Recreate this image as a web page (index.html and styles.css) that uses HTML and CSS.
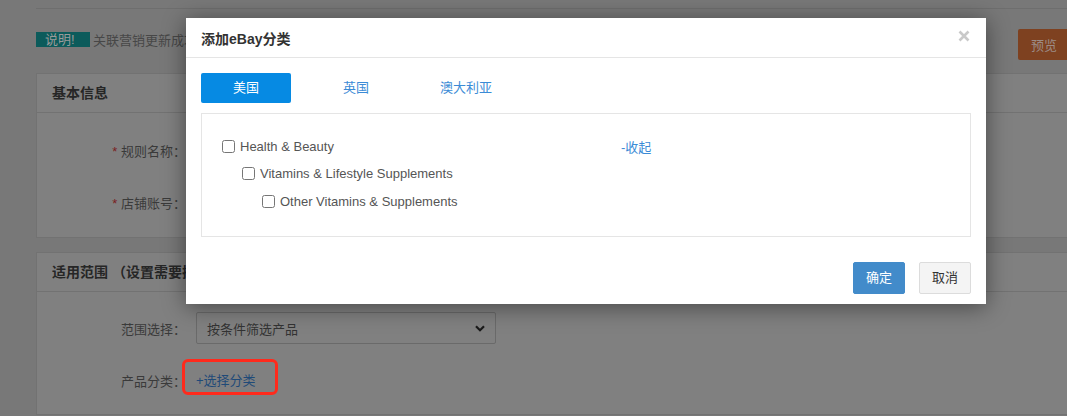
FILE: index.html
```html
<!DOCTYPE html>
<html lang="zh-CN">
<head>
    <meta charset="UTF-8">
    <meta name="viewport" content="width=device-width, initial-scale=1.0">
    <title>关联营销规则</title>
    <link rel="stylesheet" href="styles.css">
</head>
<body class="dimmed">

    <!-- page behind the dialog, painted in its dimmed colours -->
    <div class="page">
        <div class="top-strip"></div>

        <div class="notice-row">
            <div class="notice">
                <span class="notice-tag">说明!</span>
                <span class="notice-text">关联营销更新成功后，需要等待一段时间才能在eBay上生效</span>
            </div>
            <button class="btn-preview">预览</button>
        </div>

        <div class="panel">
            <div class="panel-head">基本信息</div>
            <div class="panel-body">
                <div class="form-row">
                    <label class="form-label"><span class="req">*</span> 规则名称：</label>
                </div>
                <div class="form-row">
                    <label class="form-label"><span class="req">*</span> 店铺账号：</label>
                </div>
            </div>
        </div>

        <div class="panel">
            <div class="panel-head"><span class="head-clip">适用范围 （设置需要插入关联营销的产品范围）</span></div>
            <div class="panel-body">
                <div class="form-row">
                    <label class="form-label">范围选择：</label>
                    <div class="select">
                        <span>按条件筛选产品</span>
                        <svg width="10" height="7" viewBox="0 0 10 7"><path d="M1 1.2 5 5.2 9 1.2" fill="none" stroke="#1a1a1a" stroke-width="2.2"/></svg>
                    </div>
                </div>
                <div class="form-row">
                    <label class="form-label">产品分类：</label>
                    <span class="pick-wrap">
                        <a class="pick-link" href="#">+选择分类</a>
                        <span class="mark"></span>
                    </span>
                </div>
            </div>
        </div>
    </div>

    <div class="modal">
        <div class="modal-head">
            <span class="modal-title">添加eBay分类</span>
            <svg class="modal-close" width="12" height="12" viewBox="0 0 12 12"><path d="M1.5 1.5 10.5 10.5M10.5 1.5 1.5 10.5" stroke="#c9c9c9" stroke-width="2.6"/></svg>
        </div>
        <div class="modal-body">
            <div class="tabs">
                <span class="tab active">美国</span>
                <span class="tab">英国</span>
                <span class="tab">澳大利亚</span>
            </div>
            <div class="tree">
                <div class="tree-row">
                    <label class="tree-item wide"><input type="checkbox"> Health &amp; Beauty</label>
                    <a class="fold" href="#">-收起</a>
                </div>
                <div class="tree-row level-2">
                    <label class="tree-item"><input type="checkbox"> Vitamins &amp; Lifestyle Supplements</label>
                </div>
                <div class="tree-row level-3">
                    <label class="tree-item"><input type="checkbox"> Other Vitamins &amp; Supplements</label>
                </div>
            </div>
        </div>
        <div class="modal-foot">
            <button class="btn-ok">确定</button>
            <button class="btn-cancel">取消</button>
        </div>
    </div>

</body>
</html>
```

FILE: styles.css
```css
body {
    margin: 0;
    overflow: hidden;
    height: 416px;
    background: #787878;
    font-family: "Liberation Sans", "Noto Sans CJK SC", sans-serif;
    font-size: 13px;
    color: #555;
}

.page {
    width: 1054px;
    height: 416px;
    padding-left: 36px;
    background: #787878;
}

.top-strip {
    height: 8px;
    border-bottom: 1px solid #6e6e6e;
}

.notice-row {
    display: flex;
    justify-content: space-between;
    align-items: flex-start;
    height: 31px;
    padding: 20px 20px 13px 0;
}

.notice {
    display: flex;
    align-items: center;
    margin-top: 1px;
}

.notice-tag {
    display: inline-block;
    width: 54px;
    height: 15px;
    line-height: 15px;
    padding-left: 9px;
    box-sizing: border-box;
    background: #0c5b5b;
    color: #9a9a9a;
}

.notice-text {
    width: 93px;
    margin-left: 3px;
    overflow: hidden;
    white-space: nowrap;
    color: #474747;
}

.btn-preview {
    width: 52px;
    height: 31px;
    border: 0;
    border-radius: 2px;
    background: #7e4120;
    color: #9c8c86;
    font-family: inherit;
    font-size: 13px;
}

.panel {
    background: #808080;
    border: 1px solid #727272;
    border-right: 0;
    margin-bottom: 14px;
}

.panel-head {
    height: 38px;
    line-height: 38px;
    padding-left: 15px;
    border-bottom: 1px solid #727272;
    font-size: 14px;
    font-weight: bold;
    color: #262626;
}

.head-clip {
    display: inline-block;
    width: 134px;
    overflow: hidden;
    white-space: nowrap;
    vertical-align: top;
}

.panel-body {
    display: flex;
    flex-direction: column;
    gap: 18px;
    padding: 20px 0 18px;
}

.panel + .panel .panel-body {
    gap: 20px;
}

.form-row {
    display: flex;
    align-items: center;
    height: 34px;
}

.panel + .panel .form-row {
    height: 32px;
}

.form-label {
    width: 149px;
    text-align: right;
    margin-right: 10px;
    color: #3a3a3a;
}

.req {
    color: #7a2020;
}

.select {
    display: flex;
    justify-content: space-between;
    align-items: center;
    box-sizing: border-box;
    width: 300px;
    height: 32px;
    padding: 0 10px;
    border: 1px solid #6a6a6a;
    border-radius: 2px;
    color: #333;
}

.pick-wrap {
    position: relative;
    display: inline-block;
    line-height: 18px;
    margin-top: 1px;
}

.pick-link {
    color: #1f4a78;
    text-decoration: none;
}

/* red annotation box drawn round the link */
.mark {
    position: absolute;
    left: -14px;
    top: -13px;
    box-sizing: border-box;
    width: 96px;
    height: 36px;
    border: 3px solid #ff2a1c;
    border-radius: 6px;
}

.modal {
    position: absolute;
    left: 186px;
    top: 18px;
    width: 800px;
    background: #fff;
    box-shadow: 0 3px 22px rgba(0, 0, 0, 0.45);
}

.modal-head {
    display: flex;
    justify-content: space-between;
    align-items: center;
    height: 39px;
    padding: 0 16px 0 15px;
    border-bottom: 1px solid #e5e5e5;
}

.modal-title {
    font-size: 14px;
    font-weight: bold;
    color: #333;
}

.modal-close {
    margin-top: -4px;
}

.modal-body {
    padding: 15px 15px 0;
}

.tabs {
    display: flex;
    gap: 20px;
}

.tab {
    width: 90px;
    height: 30px;
    line-height: 30px;
    text-align: center;
    border-radius: 2px;
    color: #3b8bd6;
}

.tab.active {
    background: #068ae3;
    color: #fff;
}

.tree {
    margin-top: 10px;
    padding: 19px 20px 21px;
    border: 1px solid #e5e5e5;
}

.tree-row {
    display: flex;
    align-items: center;
    height: 27px;
}

.tree-row.level-2 {
    padding-left: 20px;
}

.tree-row.level-3 {
    padding-left: 40px;
}

.tree-row:last-child {
    height: 28px;
}

.tree-item {
    display: flex;
    align-items: center;
    color: #555;
}

.tree-item.wide {
    width: 399px;
}

.tree-item input {
    width: 13px;
    height: 13px;
    margin: 0 5px 0 0;
}

.fold {
    color: #3b8bd6;
    text-decoration: none;
}

.modal-foot {
    display: flex;
    justify-content: flex-end;
    gap: 14px;
    padding: 25px 15px 10px;
}

.modal-foot button {
    width: 52px;
    height: 32px;
    padding: 0;
    line-height: 30px;
    border-radius: 2px;
    font-family: inherit;
    font-size: 13px;
    cursor: pointer;
}

.btn-ok {
    border: 1px solid #428bca;
    background: #428bca;
    color: #fff;
}

.btn-cancel {
    border: 1px solid #dcdcdc;
    background: #f4f4f4;
    color: #333;
}
```
